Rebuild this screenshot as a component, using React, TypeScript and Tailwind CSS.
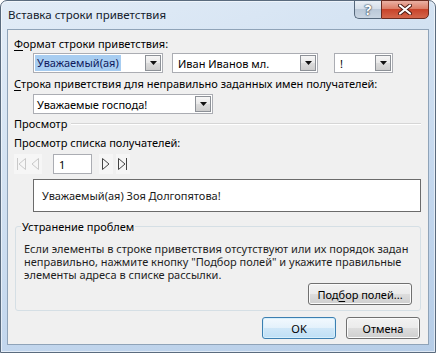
import React from 'react';

const font = { fontFamily: '"Noto Sans", "Open Sans", sans-serif' };

function Arrow() {
  return (
    <svg width="7" height="4" viewBox="0 0 7 4">
      <path d="M0 0h7L3.5 4z" fill="#111" />
    </svg>
  );
}

function Combo({
  width,
  pad,
  children,
}: {
  width: string;
  pad: string;
  children: React.ReactNode;
}) {
  return (
    <div className={`flex h-[20px] items-stretch border border-[#abadb3] bg-white ${width}`}>
      <div className={`flex flex-1 items-center overflow-hidden whitespace-nowrap ${pad}`}>{children}</div>
      <div className="m-px flex w-[16px] items-center justify-center border border-[#8d9197] bg-[linear-gradient(to_bottom,#f6f6f6_0%,#e9e9e9_50%,#dcdcdc_51%,#cdcdcd_100%)]">
        <Arrow />
      </div>
    </div>
  );
}

function NavIcon({ kind, enabled }: { kind: 'first' | 'prev' | 'next' | 'last'; enabled: boolean }) {
  const c = enabled ? '#454545' : '#c9c9c9';
  return (
    <svg width="10" height="14" viewBox="0 0 10 14">
      {kind === 'first' && (
        <>
          <path d="M1.5 1v12" stroke={c} />
          <path d="M9.5 1.5L3 7l6.5 5.5z" fill="none" stroke={c} />
        </>
      )}
      {kind === 'prev' && <path d="M8.5 1.5L2 7l6.5 5.5z" fill="none" stroke={c} />}
      {kind === 'next' && <path d="M1.5 1.5L8 7l-6.5 5.5z" fill="none" stroke={c} />}
      {kind === 'last' && (
        <>
          <path d="M0.5 1.5L7 7l-6.5 5.5z" fill="none" stroke={c} />
          <path d="M8.5 1v12" stroke={c} />
        </>
      )}
    </svg>
  );
}

function WinButton({ width, primary, children }: { width: string; primary?: boolean; children: React.ReactNode }) {
  const skin = primary
    ? 'border-[#3c7fb1] bg-[linear-gradient(to_bottom,#f2f9fe_0%,#e3f1fb_50%,#cfe7f8_51%,#bfdff5_100%)] shadow-[inset_0_0_0_1px_#d6effc]'
    : 'border-[#707070] bg-[linear-gradient(to_bottom,#f2f2f2_0%,#ebebeb_50%,#dddddd_51%,#cfcfcf_100%)] shadow-[inset_0_0_0_1px_#fbfbfb]';
  return (
    <div className={`flex h-[22px] items-center justify-center rounded-[3px] border text-black ${width} ${skin}`}>
      {children}
    </div>
  );
}

export default function App() {
  return (
    <div className="h-[353px] w-[436px] bg-white text-[11px] text-black" style={font}>
      <div className="flex h-full w-full flex-col rounded-t-[7px] border border-[#5a6b7e] bg-[linear-gradient(160deg,#e2ecf7_0%,#d3e2f2_35%,#c2d6ed_70%,#b6cde7_100%)] px-[6px] pb-[7px] shadow-[inset_0_0_0_1px_rgba(255,255,255,0.55)]">
        {/* title bar */}
        <div className="flex h-[28px] items-start">
          <span className="mt-[6px] ml-px text-[11.5px] leading-[16px] text-[#14202c]">Вставка строки приветствия</span>
          <div className="-mt-px ml-auto flex">
            <div className="flex h-[19px] w-[27px] items-center justify-center rounded-bl-[5px] border border-r-0 border-[#55677b] bg-[linear-gradient(to_bottom,#e9eff6_0%,#d5dfea_45%,#bac8d8_50%,#c9d5e2_100%)]">
              <span
                className="text-[14px] leading-none font-bold text-white"
                style={{ textShadow: '0 0 1px #3a4a5c, 0 0 1px #3a4a5c, 0 0 2px #3a4a5c' }}
              >
                ?
              </span>
            </div>
            <div className="flex h-[19px] w-[48px] items-center justify-center rounded-br-[5px] border border-[#6a2b20] bg-[linear-gradient(to_bottom,#eab1a4_0%,#dc7e68_45%,#c8432a_50%,#d3664b_100%)]">
              <svg width="14" height="11" viewBox="0 0 14 11">
                <path d="M2 1.5l10 8M12 1.5l-10 8" stroke="#4a1a12" strokeWidth="4" strokeLinecap="round" />
                <path d="M2 1.5l10 8M12 1.5l-10 8" stroke="#ffffff" strokeWidth="2.2" strokeLinecap="round" />
              </svg>
            </div>
          </div>
        </div>

        {/* client area */}
        <div className="flex flex-1 flex-col border border-[#8fa3b8] bg-[#f0f0f0] pr-[7px] pl-[6px] leading-[15px]">
          <div className="mt-[6px]">
            <span className="underline underline-offset-2">Ф</span>ормат строки приветствия:
          </div>
          <div className="mt-[2px] ml-[19px] flex">
            <Combo width="w-[130px]" pad="pl-px">
              <span className="bg-[#a7cdf1] px-[2px] leading-[16px] text-[#0f1a5c]">Уважаемый(ая)</span>
            </Combo>
            <div className="ml-[9px]">
              <Combo width="w-[146px]" pad="pl-[5px]">Иван Иванов мл.</Combo>
            </div>
            <div className="ml-[16px]">
              <Combo width="w-[59px]" pad="pl-[5px]">!</Combo>
            </div>
          </div>

          <div className="mt-[3px]">
            <span className="underline underline-offset-2">С</span>трока приветствия для неправильно заданных имен получателей:
          </div>
          <div className="mt-[3px] ml-[19px] flex">
            <Combo width="w-[180px]" pad="pl-[3px]">Уважаемые господа!</Combo>
          </div>

          <div className="mt-[2px] flex items-center">
            <span>Просмотр</span>
            <div className="ml-[4px] h-px flex-1 bg-[#d6d6d6] shadow-[0_1px_0_#ffffff]" />
          </div>

          <div className="mt-[4px]">Просмотр списка получателей:</div>
          <div className="mt-[4px] flex h-[20px] items-center">
            <div className="flex h-[20px] w-[14px] items-center justify-center bg-[#f6f6f6]">
              <NavIcon kind="first" enabled={false} />
            </div>
            <div className="flex h-[20px] w-[14px] items-center justify-center bg-[#f6f6f6]">
              <NavIcon kind="prev" enabled={false} />
            </div>
            <div className="ml-[11px] flex h-[20px] w-[39px] items-center border border-[#abadb3] bg-white pl-[5px]">1</div>
            <div className="ml-[7px] flex h-[20px] w-[14px] items-center justify-center bg-[#f6f6f6]">
              <NavIcon kind="next" enabled />
            </div>
            <div className="ml-[3px] flex h-[20px] w-[14px] items-center justify-center bg-[#f6f6f6]">
              <NavIcon kind="last" enabled />
            </div>
          </div>

          <div className="mt-[5px] ml-[19px] flex h-[33px] items-center border border-[#6b6b6b] bg-white pl-[8px] text-[#1a1a1a]">
            Уважаемый(ая) Зоя Долгопятова!
          </div>

          <fieldset className="mt-[7px] ml-px flex flex-col rounded-[3px] border border-[#d5dfe5] pr-[8px] pb-[5px] pl-[7px]">
            <legend className="-ml-[2px] px-[1px] leading-[15px]">Устранение проблем</legend>
            <p className="mt-[8px] pl-px leading-[13px] text-[#1e1e1e]">
              Если элементы в строке приветствия отсутствуют или их порядок задан неправильно, нажмите кнопку "Подбор полей" и укажите правильные элементы адреса в списке рассылки.
            </p>
            <div className="mt-[2px] flex justify-end">
              <WinButton width="w-[104px]">
                Под<span className="underline underline-offset-2">б</span>ор полей...
              </WinButton>
            </div>
          </fieldset>

          <div className="mt-[6px] mr-px flex justify-end gap-[10px]">
            <WinButton width="w-[74px]" primary>
              OK
            </WinButton>
            <WinButton width="w-[74px]">Отмена</WinButton>
          </div>
        </div>
      </div>
    </div>
  );
}
